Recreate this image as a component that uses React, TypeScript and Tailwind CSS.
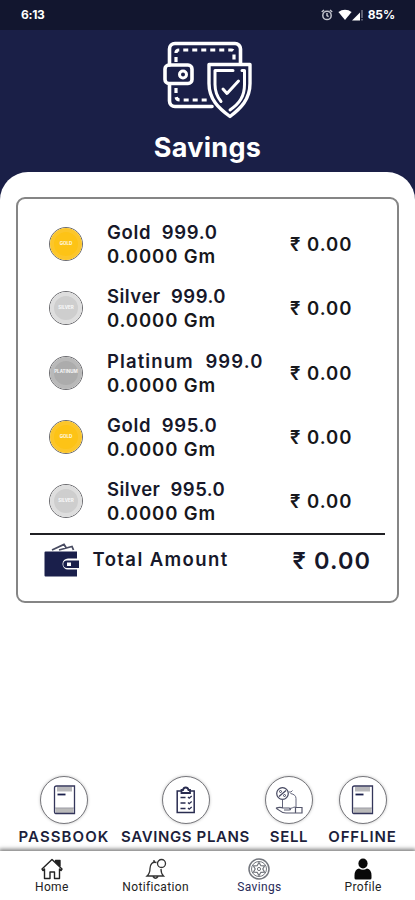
import type { ReactNode } from 'react';

interface Holding {
  metal: 'Gold' | 'Silver' | 'Platinum';
  purity: string;
  tracking: string;
}

const holdings: Holding[] = [
  { metal: 'Gold', purity: '999.0', tracking: 'tracking-[0.65px]' },
  { metal: 'Silver', purity: '999.0', tracking: 'tracking-[0.5px]' },
  { metal: 'Platinum', purity: '999.0', tracking: 'tracking-[1.1px]' },
  { metal: 'Gold', purity: '995.0', tracking: 'tracking-[0.65px]' },
  { metal: 'Silver', purity: '995.0', tracking: 'tracking-[0.45px]' },
];

const coinClasses = {
  Gold: 'bg-[#fdc316] border-[#fcc62a]',
  Silver: 'bg-[#cecece] border-[#dedede]',
  Platinum: 'bg-[#acacac] border-[#b9b9b9]',
};

function Coin({ metal }: { metal: Holding['metal'] }) {
  return (
    <div className="w-[34px] h-[34px] shrink-0 rounded-full border border-[#6c6c70]">
      <div
        className={`w-full h-full rounded-full border-4 flex items-center justify-center ${coinClasses[metal]}`}
      >
        <span className="text-[4.5px] leading-none font-bold text-white/90">{metal.toUpperCase()}</span>
      </div>
    </div>
  );
}

function StatusBar() {
  return (
    <div className="h-[30px] bg-[#12162f] flex items-center justify-between pl-[21px] pr-[20px] text-white">
      <span className="text-[12px] font-bold tracking-[-0.3px]">6:13</span>
      <div className="flex items-center">
        <svg width="12" height="12" viewBox="0 0 12 12" fill="none" stroke="#c2c3cc" strokeWidth="1.5">
          <circle cx="6" cy="6.4" r="4.2" />
          <path d="M6 4v2.6l1.6 1M.8 3 3 1M9 1l2.2 2" />
        </svg>
        <svg className="ml-[5px]" width="14" height="12" viewBox="0 0 14 12" fill="white">
          <path d="M.4 3.1C4-.2 10-.2 13.6 3.1L7 11z" />
        </svg>
        <svg width="11" height="12" viewBox="0 0 11 12">
          <path d="M0 11.5 8 3.5v8z" fill="white" />
          <path d="M10 1v8M10 10v1.5" stroke="#a6a8b5" />
        </svg>
        <span className="ml-[5px] text-[12px] font-bold tracking-[-0.1px]">85%</span>
      </div>
    </div>
  );
}

function WalletShieldIcon() {
  return (
    <svg width="90" height="80" viewBox="0 0 90 80" fill="none" stroke="white" strokeLinecap="round" strokeLinejoin="round">
      <path d="M6.5 24V8A5.5 5.5 0 0 1 12 2.500h60A5.500 5.500 0 0 1 77.500 8v14M6.500 43v17a5.500 5.500 0 0 0 5.500 5.500h37" strokeWidth="3.600" />
      <path d="M13 21v-9q0-3 3-3h52q3 0 3 3v10M13 47v8q0 4 4 4h30" strokeWidth="3.200" strokeLinecap="butt" strokeDasharray="5 4" />
      <rect x="2" y="24" width="27" height="18.500" rx="4" strokeWidth="3.600" />
      <circle cx="20" cy="33.500" r="3.500" strokeWidth="3" />
      <path
        d="M46 23.500h41v19c0 16-9.500 25-20 33-11-8-21-17-21-33z"
        fill="#1a1f47"
        strokeWidth="3.400"
      />
      <path d="M70 29.500H52v14c0 6 2 12 6 17M79 29.500h2.500v14c0 12-5 19-14.500 25.500" strokeWidth="3" />
      <path d="m60 48 4 4.500L75.500 40" strokeWidth="3" />
    </svg>
  );
}

function TotalWalletIcon() {
  return (
    <svg width="36" height="35" viewBox="0 0 36 35">
      <path d="M8 7 20 1.500l2 3M15 7l13-3.500 1.500 3.500" fill="none" stroke="#484b61" strokeWidth="1.800" />
      <path d="M1.500 8.500H33v7H24a5.500 5.500 0 0 0 0 11h9v7H1.500Q.5 33.500.5 32.500V9.500q0-1 1-1z" fill="#1a1f4b" />
      <path d="M23 17.500h12v7.500H23a3.750 3.750 0 0 1 0-7.500z" fill="#1a1f4b" />
      <rect x="23" y="19.500" width="4" height="3.500" fill="white" />
    </svg>
  );
}

function BookIcon() {
  return (
    <svg width="23" height="30" viewBox="0 0 23 30" fill="none">
      <path d="M4 4h15" stroke="#b8b8bb" strokeWidth="5" />
      <path d="M2.500 23h18v5h-18z" fill="#bababa" />
      <path d="M3.500 1h18v27.500h-19q-1 0-1-1.500V3q0-2 2-2z" stroke="#34365b" strokeWidth="1.300" />
      <path d="M2 23h19" stroke="#9b9ba4" />
      <path d="M4.500 9.500h8" stroke="#1a1f4b" strokeWidth="1.800" />
    </svg>
  );
}

function ClipboardIcon() {
  return (
    <svg width="20" height="29" viewBox="0 0 20 29" fill="none" stroke="#292c50" strokeWidth="1.500">
      <path d="M6 5H1.200v21.500h17V5H14" />
      <path d="M5.500 4H7q.5-2.500 2.700-2.500T12.500 4H14v3H5.500z" strokeWidth="1.800" />
      <path d="M4.500 11.500h5M4.500 17h5M4.500 22.500h5" />
      <path d="m12 11 1.200 1.200 2.500-2.200M12 16.500l1.200 1.200 2.500-2.200M12 22l1.200 1.200 2.500-2.200" strokeWidth="1.300" />
    </svg>
  );
}

function SellIcon() {
  return (
    <svg width="28" height="29" viewBox="0 0 28 29" fill="none" stroke="#62647a" strokeWidth="1">
      <circle cx="7.500" cy="7.500" r="5.800" stroke="#44465f" strokeWidth="1.200" />
      <path d="m4 10.500 7-6" stroke="#44465f" strokeWidth="1.200" />
      <circle cx="5.500" cy="5.500" r="1" stroke="#44465f" />
      <circle cx="9.500" cy="9.500" r="1" stroke="#44465f" />
      <path d="M7.500 13.500V22" />
      <path d="M13.500 6h2.500l1.500-1.500M15.500 7.500q5.500 1 5.500 5v8.500" />
      <path d="M1 22c3-1 5-1 7 0h6c2 0 2 2 0 2H9M1 22c3 2 5 5 10 5h9M20.500 21.500H27V27h-6.500z" stroke="#55576c" strokeWidth="1.200" />
      <path d="M14 22.500c3 0 4-1.500 6.500-1.500" />
    </svg>
  );
}

function HomeIcon() {
  return (
    <svg width="22" height="22" viewBox="0 0 22 22" fill="none" stroke="#222" strokeWidth="1.400" strokeLinejoin="round">
      <path d="M1 11 11 1.500 21 11l-1 1.500-1.500-1.500v9.500h-5V14H9v6.500H3.500V11L2 12.500z" />
      <path d="M14.500 2.500H19V8l-4.500-4.500z" fill="#222" />
    </svg>
  );
}

function BellIcon() {
  return (
    <svg width="22" height="22" viewBox="0 0 22 22" fill="none" stroke="#333" strokeWidth="1.300">
      <path d="M11.500 4.500c-4-1-6.500 1.500-6.500 6 0 4-.8 5.500-3 7.500h16.500c-2.200-2-2.500-3.500-2.500-7M8 18.500q2.500 3.500 5 0M9 4V2" />
      <circle cx="16.500" cy="5.500" r="4" />
    </svg>
  );
}

function WheelIcon() {
  return (
    <svg width="22" height="22" viewBox="0 0 22 22" fill="none" stroke="#74777e" strokeWidth="1">
      <circle cx="11" cy="11" r="10" strokeWidth="1.500" />
      <circle cx="11" cy="11" r="7.500" />
      {/* six-pointed star */}
      <path d="m11 4.500 1.900 3.200 3.700.1L14.800 11l1.800 3.200-3.700.1L11 17.500l-1.900-3.200-3.700-.1L7.200 11 5.400 7.800l3.700-.1z" strokeWidth="1.200" />
      <circle cx="11" cy="11" r="1.600" />
    </svg>
  );
}

function PersonIcon() {
  return (
    <svg width="18" height="22" viewBox="0 0 18 22" fill="#080808">
      <ellipse cx="9" cy="5.500" rx="4.600" ry="5" />
      <path d="M5 10.500q4 2.500 8 0 4.500 1 4.500 7V20q0 1.500-1.500 1.500H2Q.5 21.500.5 20v-2.500q0-6 4.500-7z" />
    </svg>
  );
}

function Action({ icon, label, className }: { icon: ReactNode; label: string; className: string }) {
  return (
    <div className={`flex flex-col items-center shrink-0 ${className}`}>
      <div className="w-12 h-12 rounded-full border border-[#77777c] bg-white shadow-[0_0_3px_rgba(0,0,0,0.25)] flex items-center justify-center">
        {icon}
      </div>
      <span className="mt-[3px] leading-5 text-[15px] font-semibold text-[#1d1f3c] whitespace-nowrap">{label}</span>
    </div>
  );
}

function NavItem({ icon, label, active = false }: { icon: ReactNode; label: string; active?: boolean }) {
  return (
    <div className="flex-1 flex flex-col items-center pt-[7px]">
      {icon}
      <span
        className={`text-[12px] leading-[14px] font-[Roboto] tracking-[0.35px] ${
          active ? 'text-[#292b58]' : 'text-[#222]'
        }`}
      >
        {label}
      </span>
    </div>
  );
}

export default function App() {
  return (
    <div className="w-[415px] h-[900px] overflow-hidden bg-white flex flex-col font-[Inter]">
      <StatusBar />

      {/* Header, its colour continues behind the rounded sheet */}
      <div className="h-[142px] shrink-0 bg-[#1a1f47] flex flex-col items-center pt-[11px]">
        <WalletShieldIcon />
        <h1 className="mt-[10px] text-[27px] leading-[34px] font-bold text-white tracking-[0.3px]">Savings</h1>
      </div>

      <div className="bg-linear-to-b from-[#1a1f47] from-[28px] to-white to-[28px] flex-1">
        <div className="h-full bg-white rounded-t-[28px] pt-[25px] px-4">
          <div className="h-[406px] rounded-[9px] border-2 border-[#858585] px-[12px] pt-[21px] flex flex-col">
            <div className="flex flex-col gap-[16.3px]">
              {holdings.map((h, i) => (
                <div key={i} className="h-12 flex items-center pl-[19px] text-[18.5px] leading-6 font-semibold text-[#17182a]">
                  <Coin metal={h.metal} />
                  <div className="ml-[24px] w-[183px] whitespace-pre">
                    <div className={h.tracking}>{`${h.metal}  ${h.purity}`}</div>
                    <div className="tracking-[0.9px] text-[#17171b]">0.0000 Gm</div>
                  </div>
                  <div className="tracking-[1px] text-[#17171b]">₹ 0.00</div>
                </div>
              ))}
            </div>
            <div className="mt-[8px] h-[2px] bg-[#202024]" />
            <div className="h-[50px] flex items-center pl-[13.5px] text-[#17182a] font-semibold">
              <TotalWalletIcon />
              <span className="ml-[13px] w-[200px] text-[18.5px] tracking-[1.4px]">Total Amount</span>
              <span className="text-[23.5px] tracking-[1.15px]">₹ 0.00</span>
            </div>
          </div>
        </div>
      </div>

      <div className="h-[75px] shrink-0 flex">
        <Action className="ml-[14px] w-[100px] tracking-[1.1px]" icon={<BookIcon />} label="PASSBOOK" />
        <Action className="w-[143px] tracking-[0.62px]" icon={<ClipboardIcon />} label="SAVINGS PLANS" />
        <Action className="w-[64px] tracking-[0.7px]" icon={<SellIcon />} label="SELL" />
        <Action className="w-[83px] tracking-[0.9px]" icon={<BookIcon />} label="OFFLINE" />
      </div>

      <div className="h-[49px] shrink-0 bg-white flex shadow-[0_-1px_4px_1px_rgba(0,0,0,0.5)]">
        <NavItem icon={<HomeIcon />} label="Home" />
        <NavItem icon={<BellIcon />} label="Notification" />
        <NavItem icon={<WheelIcon />} label="Savings" active />
        <NavItem icon={<PersonIcon />} label="Profile" />
      </div>
    </div>
  );
}
